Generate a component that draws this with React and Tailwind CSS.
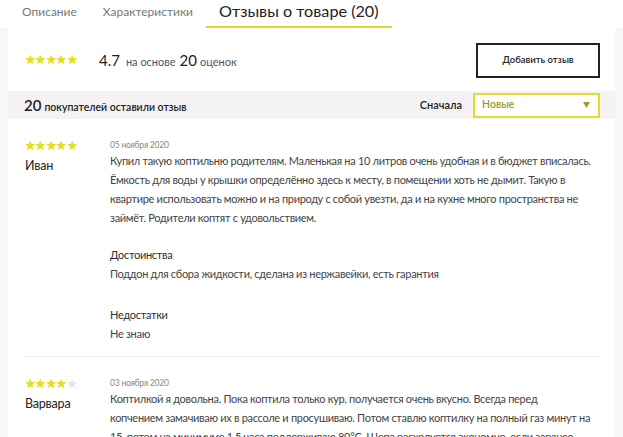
import React from "react";

const Star = ({ on = true }) => (
  <svg width="10.4" height="11" viewBox="0.8 0 22.4 24" className="shrink-0">
    <path
      d="M12 1.5l3.2 7.2 7.8.6-6 5.1 1.9 7.6L12 18l-6.9 4 1.9-7.6-6-5.1 7.8-.6z"
      fill={on ? "#e3df1f" : "#e6e6e6"}
    />
  </svg>
);

const Stars = ({ n = 5 }) => (
  <div className="flex items-center h-[12px]">
    {[0, 1, 2, 3, 4].map((i) => (
      <Star key={i} on={i < n} />
    ))}
  </div>
);

const Lines = ({ lines }) => (
  <>
    {lines.map((l, i) => (
      <React.Fragment key={i}>
        {l}
        {i < lines.length - 1 && <br />}
      </React.Fragment>
    ))}
  </>
);

const body = "text-[11px] leading-[19px] tracking-[-0.3px] whitespace-nowrap";

const Review = ({ stars, date, name, lines, pros, cons, divider }) => (
  <div className={"flex pt-[20px] pb-[13px] mx-[15px] " + (divider ? "border-b border-[#ececec]" : "")}>
    <div className="w-[87px] shrink-0 pl-[2px]">
      <Stars n={stars} />
      <div className="mt-[5px] text-[12.5px] leading-[19px] tracking-[-0.2px] text-[#222]">{name}</div>
    </div>
    <div className="flex-1 min-w-0">
      <div className="text-[8.5px] leading-[12px] tracking-[-0.2px] text-[#888]">{date}</div>
      <p className={body + " text-[#444]"}>
        <Lines lines={lines} />
      </p>
      {pros && (
        <>
          <div className={"mt-[18px] text-[#2e2e2e] " + body}>Достоинства</div>
          <div className={"text-[#444] " + body}>{pros}</div>
        </>
      )}
      {cons && (
        <>
          <div className={"mt-[22px] text-[#2e2e2e] " + body}>Недостатки</div>
          <div className={"text-[#444] " + body}>{cons}</div>
        </>
      )}
    </div>
  </div>
);

export default function App() {
  return (
    <div
      className="w-[623px] h-[437px] overflow-hidden bg-white"
      style={{ fontFamily: "Lato, 'Noto Sans', sans-serif" }}
    >
      {/* Tabs */}
      <div className="flex h-[28px] pl-[9px] items-start">
        <div className="px-[13px] h-[28px] flex items-center pb-[4px] text-[12px] text-[#777]">Описание</div>
        <div className="px-[13px] h-[28px] flex items-center pb-[4px] text-[12px] text-[#777]">Характеристики</div>
        <div className="px-[13px] h-[28px] flex items-center pb-[4px] text-[16.2px] text-[#222] border-b-2 border-[#dcd92e]">
          Отзывы о товаре (20)
        </div>
      </div>

      <div className="bg-[#f7f7f7] px-[8px] h-[409px]">
        <div className="bg-white h-full">
          {/* Rating row */}
          <div className="flex items-center h-[63px] pl-[17px] pr-[15px] pt-[1px]">
            <div className="-mt-[2px]">
              <Stars n={5} />
            </div>
            <div className="ml-[22px] flex items-baseline text-[#222]">
              <span className="text-[15px]">4.7</span>
              <span className="ml-[6px] text-[11px] text-[#555]">на основе</span>
              <span className="ml-[4px] text-[15px]">20</span>
              <span className="ml-[3px] text-[11px] text-[#555]">оценок</span>
            </div>
            <button className="ml-auto w-[124px] h-[35px] border-2 border-[#222] text-[9.5px] font-semibold text-[#222] flex items-center justify-center">
              Добавить отзыв
            </button>
          </div>

          {/* Sort band */}
          <div className="flex items-center h-[28px] bg-[#f4f2f2] pl-[16px] pr-[15px]">
            <div className="flex items-baseline text-[#222] font-semibold">
              <span className="text-[15px]">20</span>
              <span className="ml-[3px] text-[10.5px]">покупателей оставили отзыв</span>
            </div>
            <span className="ml-auto text-[11px] font-semibold text-[#222]">Сначала</span>
            <div className="ml-[11px] w-[127px] h-[25px] border-2 border-[#e0dd2b] bg-white flex items-center px-[7px]">
              <span className="text-[10.5px] font-semibold text-[#9c9a1c]">Новые</span>
              <svg className="ml-auto mr-[1px]" width="7" height="6" viewBox="0 0 7 6">
                <path d="M0 0h7L3.5 6z" fill="#9c9a1c" />
              </svg>
            </div>
          </div>

          <Review
            divider
            stars={5}
            date="05 ноября 2020"
            name="Иван"
            lines={[
              "Купил такую коптильню родителям. Маленькая на 10 литров очень удобная и в бюджет вписалась.",
              "Ёмкость для воды у крышки определённо здесь к месту, в помещении хоть не дымит. Такую в",
              "квартире использовать можно и на природу с собой увезти, да и на кухне много пространства не",
              "займёт. Родители коптят с удовольствием.",
            ]}
            pros="Поддон для сбора жидкости, сделана из нержавейки, есть гарантия"
            cons="Не знаю"
          />
          <Review
            stars={4}
            date="03 ноября 2020"
            name="Варвара"
            lines={[
              "Коптилкой я довольна. Пока коптила только кур, получается очень вкусно. Всегда перед",
              "копчением замачиваю их в рассоле и просушиваю. Потом ставлю коптилку на полный газ минут на",
              "15, потом на минимуме 1,5 часа поддерживаю 80°C. Щепа расходуется экономно, если заранее",
            ]}
          />
        </div>
      </div>
    </div>
  );
}
